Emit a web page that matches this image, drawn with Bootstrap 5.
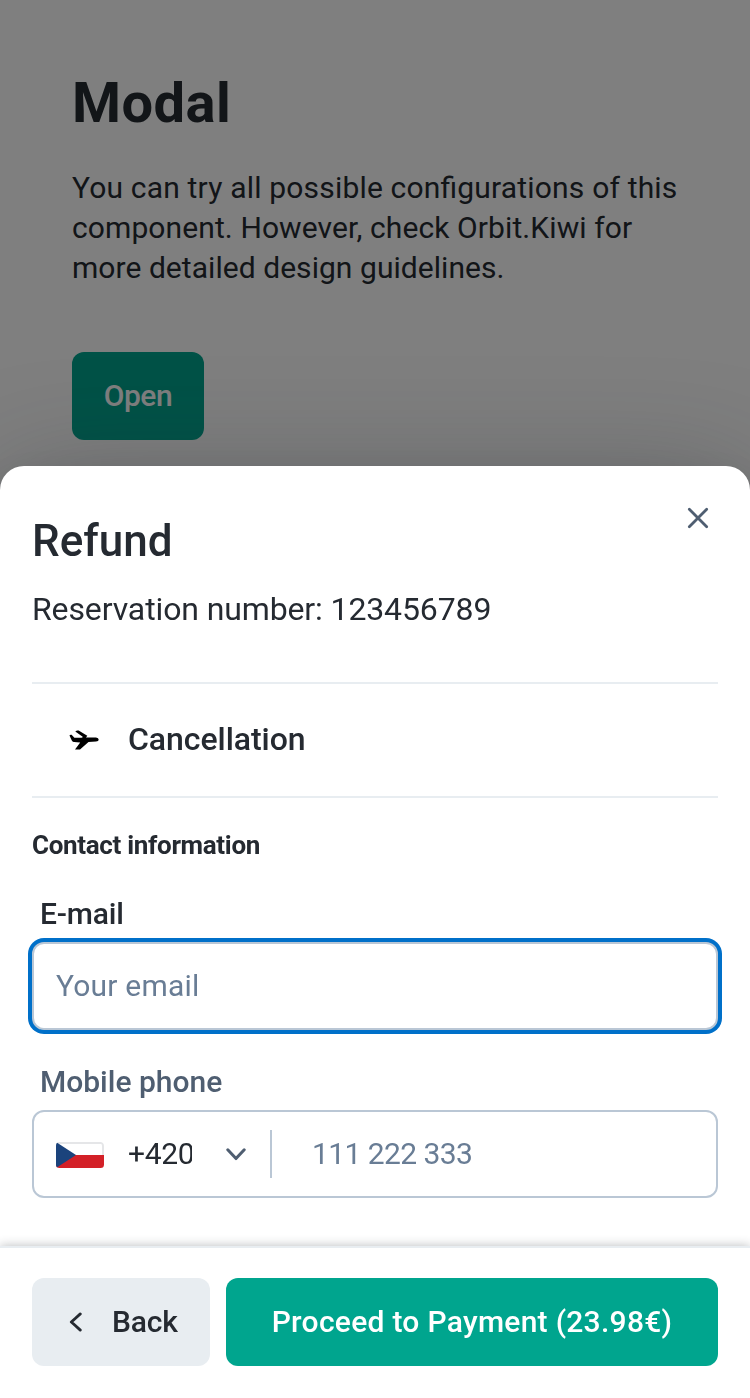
<!DOCTYPE html>
<html lang="en">
<head>
<meta charset="utf-8">
<meta name="viewport" content="width=device-width, initial-scale=1">
<title>Modal</title>
<link href="https://cdn.jsdelivr.net/npm/bootstrap@5.3.0/dist/css/bootstrap.min.css" rel="stylesheet">
<style>
  body { font-family: Roboto, "Liberation Sans", sans-serif; font-size: 30px; line-height: 40px; color: #252a31; height: 1398px; overflow: hidden; background: #fff; }
  .story { padding: 71px 72px 0; }
  .story h1 { font-size: 56px; line-height: 64px; font-weight: 700; margin-bottom: 33px; letter-spacing: .45px; }
  .story p { margin-bottom: 64px; letter-spacing: .1px; font-feature-settings: "liga" 1; }
  .story p .wide { letter-spacing: .18px; }
  .story p .tight { letter-spacing: .05px; }
  .btn { --bs-btn-font-size: 30px; --bs-btn-font-weight: 500; --bs-btn-line-height: 40px; --bs-btn-border-radius: 12px; --bs-btn-border-width: 0; height: 88px; }
  .btn-kiwi, .btn-kiwi:hover { background: #00a58e; color: #fff; }
  .btn-cloud, .btn-cloud:hover { background: #e8edf1; color: #252a31; }
  .btn-open { width: 132px; letter-spacing: -.5px; }
  .veil { background: rgba(0, 0, 0, .5); z-index: 1040; }
  .sheet { z-index: 1050; height: 932px; background: #fff; border-radius: 24px 24px 0 0; box-shadow: 0 24px 48px -8px rgba(37, 42, 49, .24), 0 16px 120px 0 rgba(37, 42, 49, .32); }
  .sheet-head { padding: 43px 32px 0; }
  .sheet-head h2 { font-size: 44px; line-height: 64px; font-weight: 500; margin-bottom: 12px; }
  .reservation { font-size: 32px; line-height: 48px; letter-spacing: -.12px; }
  .close-btn { top: 28px; right: 28px; width: 48px; height: 48px; }
  .sheet-body { padding: 49px 32px 0; }
  .cancel-row { height: 116px; padding: 0 32px 2px; border-top: 2px solid #e8edf1; border-bottom: 2px solid #e8edf1; font-size: 32px; font-weight: 500; letter-spacing: -.05px; }
  .plane { margin: 2px 29px 0 5px; }
  .section-title { font-size: 26px; line-height: 32px; font-weight: 700; margin: 31px 0 0; letter-spacing: -.32px; }
  .form-label { font-weight: 500; line-height: 40px; margin: 0 0 0 8px; }
  .mail-label { letter-spacing: -.15px; }
  .field { height: 88px; border: 2px solid #bac7d5; border-radius: 12px; background: #fff; }
  .form-control.field { font-size: 30px; line-height: 40px; padding: 0 22px 2px; letter-spacing: .2px; }
  .form-control::placeholder { color: #697d95; opacity: 1; }
  .form-control.field:focus, .field.active { border-color: #bac7d5; box-shadow: 0 0 0 4px #0070c9; }
  .group-mail { margin-top: 33px; }
  .group-phone { margin-top: 32px; }
  .group-mail .field, .group-phone .field { margin-top: 8px; }
  .phone-label { color: #4f5e71; }
  .prefix { width: 238px; height: 48px; padding-left: 22px; border-right: 2px solid #bac7d5; }
  .flag { margin-top: 2px; }
  .code { width: 64px; margin-left: 24px; overflow: hidden; white-space: nowrap; letter-spacing: -.3px; }
  .chevron { margin-left: 34px; }
  .phone .form-control { font-size: 30px; padding: 0 0 2px 40px; letter-spacing: -.57px; }
  .sheet-foot { height: 152px; padding: 30px 32px 32px; border-top: 2px solid #e8edf1; background: #fff; box-shadow: 0 0 10px rgba(37, 42, 49, .32); clip-path: inset(-30px 0 0 0); }
  .btn-back { width: 178px; letter-spacing: -.15px; }
  .back-arrow { margin: 0 30px 0 37px; }
  .btn-pay { letter-spacing: .28px; }
</style>
</head>
<body>
<main class="story">
  <h1>Modal</h1>
  <p class="text-nowrap"><span class="wide">You can try all possible configurations of this</span><br>component. However, check Orbit.Kiwi for<br><span class="tight">more detailed design guidelines.</span></p>
  <button class="btn btn-kiwi btn-open p-0" type="button">Open</button>
</main>
<div class="veil position-fixed top-0 start-0 w-100 h-100"></div>

<section class="sheet fixed-bottom d-flex flex-column" role="dialog" aria-modal="true" aria-labelledby="refund">
  <header class="sheet-head">
    <h2 id="refund">Refund</h2>
    <div class="reservation">Reservation number: 123456789</div>
    <button type="button" class="close-btn btn position-absolute p-0 d-flex align-items-center justify-content-center" aria-label="Close">
      <svg width="22" height="22" viewBox="0 0 22 22" fill="none" stroke="#4f5e71" stroke-width="2.8" stroke-linecap="round"><path d="M2.3 2.3l17.4 17.4M19.7 2.3L2.3 19.7"/></svg>
    </button>
  </header>
  <div class="sheet-body flex-grow-1">
    <div class="cancel-row d-flex align-items-center">
      <svg class="plane" width="30" height="20" viewBox="0 0 30 20"><path d="M.5 5.4Q.8 4.6 2.6 4.8L5.4 7.7H12.6L14 6.9 6.3 1.4Q7.8 0 9.6.6L18.3 5.8 17 7.6H27Q29.7 8 29.7 9.7T27 11.6L19.5 12 11 19.4 6 19.5 11.2 12.5 4.7 11.9Q3.4 11.8 2.8 10.5Z"/></svg>
      <span>Cancellation</span>
    </div>
    <h3 class="section-title">Contact information</h3>
    <div class="group-mail">
      <label class="form-label mail-label d-block" for="email">E-mail</label>
      <input id="email" class="form-control field active" type="email" placeholder="Your email">
    </div>
    <div class="group-phone">
      <label class="form-label phone-label d-block" for="phone">Mobile phone</label>
      <div class="field phone d-flex align-items-center">
        <div class="prefix d-flex align-items-center flex-shrink-0">
          <svg class="flag" width="48" height="26" viewBox="0 0 48 26">
            <clipPath id="round"><rect width="48" height="26" rx="3.5"/></clipPath>
            <g clip-path="url(#round)"><path fill="#fff" d="M0 0h48v13H0z"/><path fill="#d32027" d="M0 13h48v13H0z"/><path d="M0 1H45Q47 1 47 4v9" fill="none" stroke="#e5e6e8" stroke-width="2"/><path fill="#1b437c" d="M0 0l20 13L0 26z"/></g>
          </svg>
          <span class="code">+420</span>
          <svg class="chevron" width="20" height="13" viewBox="0 0 20 13" fill="none" stroke="#4f5e71" stroke-width="3" stroke-linecap="round" stroke-linejoin="round"><path d="M1.8 1.8L10 10.6 18.2 1.8"/></svg>
        </div>
        <input id="phone" class="form-control border-0 shadow-none bg-transparent" type="tel" placeholder="111 222 333">
      </div>
    </div>
  </div>
  <footer class="sheet-foot d-flex gap-3">
    <button type="button" class="btn btn-cloud btn-back p-0 d-flex align-items-center">
      <svg class="back-arrow" width="13" height="20" viewBox="0 0 13 20" fill="none" stroke="#252a31" stroke-width="2.8" stroke-linecap="round" stroke-linejoin="round"><path d="M11.3 1.9L2.3 10 11.3 18.1"/></svg>
      Back
    </button>
    <button type="button" class="btn btn-kiwi btn-pay flex-grow-1 p-0">Proceed to Payment (23.98€)</button>
  </footer>
</section>
<script src="https://cdn.jsdelivr.net/npm/bootstrap@5.3.0/dist/js/bootstrap.bundle.min.js"></script>
</body>
</html>
